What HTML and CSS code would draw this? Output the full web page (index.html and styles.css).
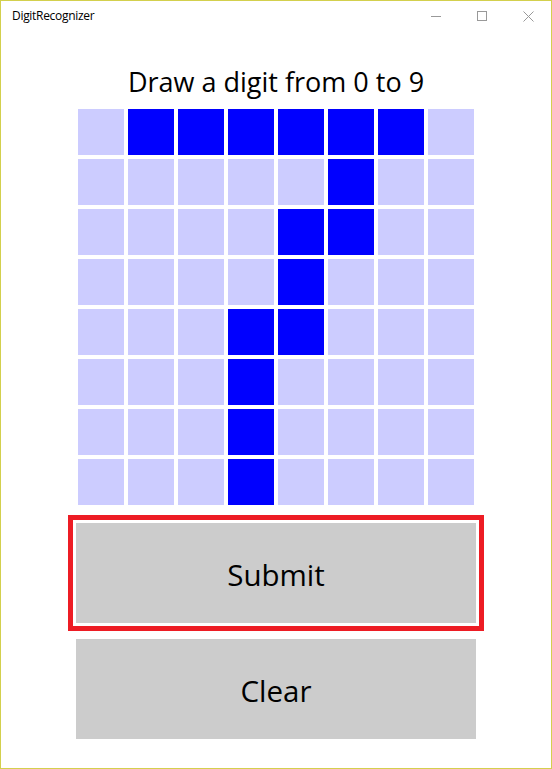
FILE: index.html
```html
<!DOCTYPE html>
<html lang="en">
<head>
<meta charset="utf-8">
<title>DigitRecognizer</title>
<link rel="stylesheet" href="styles.css">
</head>
<body>
<div class="window">
  <div class="titlebar">
    <div class="app-title">DigitRecognizer</div>
    <div class="controls">
      <div class="ctrl"><svg width="10" height="10" viewBox="0 0 10 10"><path d="M0 5.5H10" stroke="#999" stroke-width="1" fill="none"/></svg></div>
      <div class="ctrl"><svg width="10" height="10" viewBox="0 0 10 10"><rect x="0.5" y="0.5" width="9" height="9" stroke="#999" stroke-width="1" fill="none"/></svg></div>
      <div class="ctrl"><svg width="11" height="11" viewBox="0 0 11 11"><path d="M0.5 0.5L10.5 10.5M10.5 0.5L0.5 10.5" stroke="#999" stroke-width="1" fill="none"/></svg></div>
    </div>
  </div>
  <div class="content">
    <h1 class="heading">Draw a digit from 0 to 9</h1>
    <div class="grid">
      <div class="cell"></div><div class="cell on"></div><div class="cell on"></div><div class="cell on"></div><div class="cell on"></div><div class="cell on"></div><div class="cell on"></div><div class="cell"></div>
      <div class="cell"></div><div class="cell"></div><div class="cell"></div><div class="cell"></div><div class="cell"></div><div class="cell on"></div><div class="cell"></div><div class="cell"></div>
      <div class="cell"></div><div class="cell"></div><div class="cell"></div><div class="cell"></div><div class="cell on"></div><div class="cell on"></div><div class="cell"></div><div class="cell"></div>
      <div class="cell"></div><div class="cell"></div><div class="cell"></div><div class="cell"></div><div class="cell on"></div><div class="cell"></div><div class="cell"></div><div class="cell"></div>
      <div class="cell"></div><div class="cell"></div><div class="cell"></div><div class="cell on"></div><div class="cell on"></div><div class="cell"></div><div class="cell"></div><div class="cell"></div>
      <div class="cell"></div><div class="cell"></div><div class="cell"></div><div class="cell on"></div><div class="cell"></div><div class="cell"></div><div class="cell"></div><div class="cell"></div>
      <div class="cell"></div><div class="cell"></div><div class="cell"></div><div class="cell on"></div><div class="cell"></div><div class="cell"></div><div class="cell"></div><div class="cell"></div>
      <div class="cell"></div><div class="cell"></div><div class="cell"></div><div class="cell on"></div><div class="cell"></div><div class="cell"></div><div class="cell"></div><div class="cell"></div>
    </div>
    <div class="focus-ring">
      <button class="btn" type="button">Submit</button>
    </div>
    <button class="btn clear" type="button">Clear</button>
  </div>
</div>
</body>
</html>
```
FILE: styles.css
```css
html, body {
  margin: 0;
  padding: 0;
  background: #ffffff;
}

.window {
  width: 552px;
  height: 769px;
  box-sizing: border-box;
  border: 1px solid #d3d04d;
  background: #ffffff;
  display: flex;
  flex-direction: column;
  font-family: "Open Sans", "Noto Sans", "Liberation Sans", sans-serif;
  color: #000000;
}

.titlebar {
  height: 30px;
  display: flex;
  align-items: flex-start;
  justify-content: space-between;
}

.app-title {
  font-size: 12px;
  line-height: 16px;
  padding: 7px 0 0 11px;
  letter-spacing: -0.3px;
}

.controls {
  display: flex;
}

.ctrl {
  width: 46px;
  height: 30px;
  display: flex;
  align-items: flex-start;
  justify-content: center;
  padding-top: 10px;
  box-sizing: border-box;
}

.content {
  display: flex;
  flex-direction: column;
  align-items: center;
}

.heading {
  margin: 33px 0 9px;
  font-size: 27px;
  font-weight: 400;
  line-height: 36px;
  height: 36px;
  white-space: nowrap;
}

.grid {
  display: grid;
  grid-template-columns: repeat(8, 46px);
  grid-auto-rows: 46px;
  gap: 4px;
}

.cell {
  background: #ccccff;
}

.cell.on {
  background: #0000ff;
}

.focus-ring {
  margin-top: 10px;
  border: 5px solid #ed1c24;
  padding: 3px;
}

.btn {
  display: block;
  width: 400px;
  height: 100px;
  border: 0;
  margin: 0;
  padding: 3px 0 0;
  background: #cccccc;
  color: #000000;
  font-family: "Open Sans", "Noto Sans", "Liberation Sans", sans-serif;
  font-size: 29.5px;
  line-height: 36px;
}

.btn.clear {
  margin-top: 8px;
  padding-top: 4px;
}
```
